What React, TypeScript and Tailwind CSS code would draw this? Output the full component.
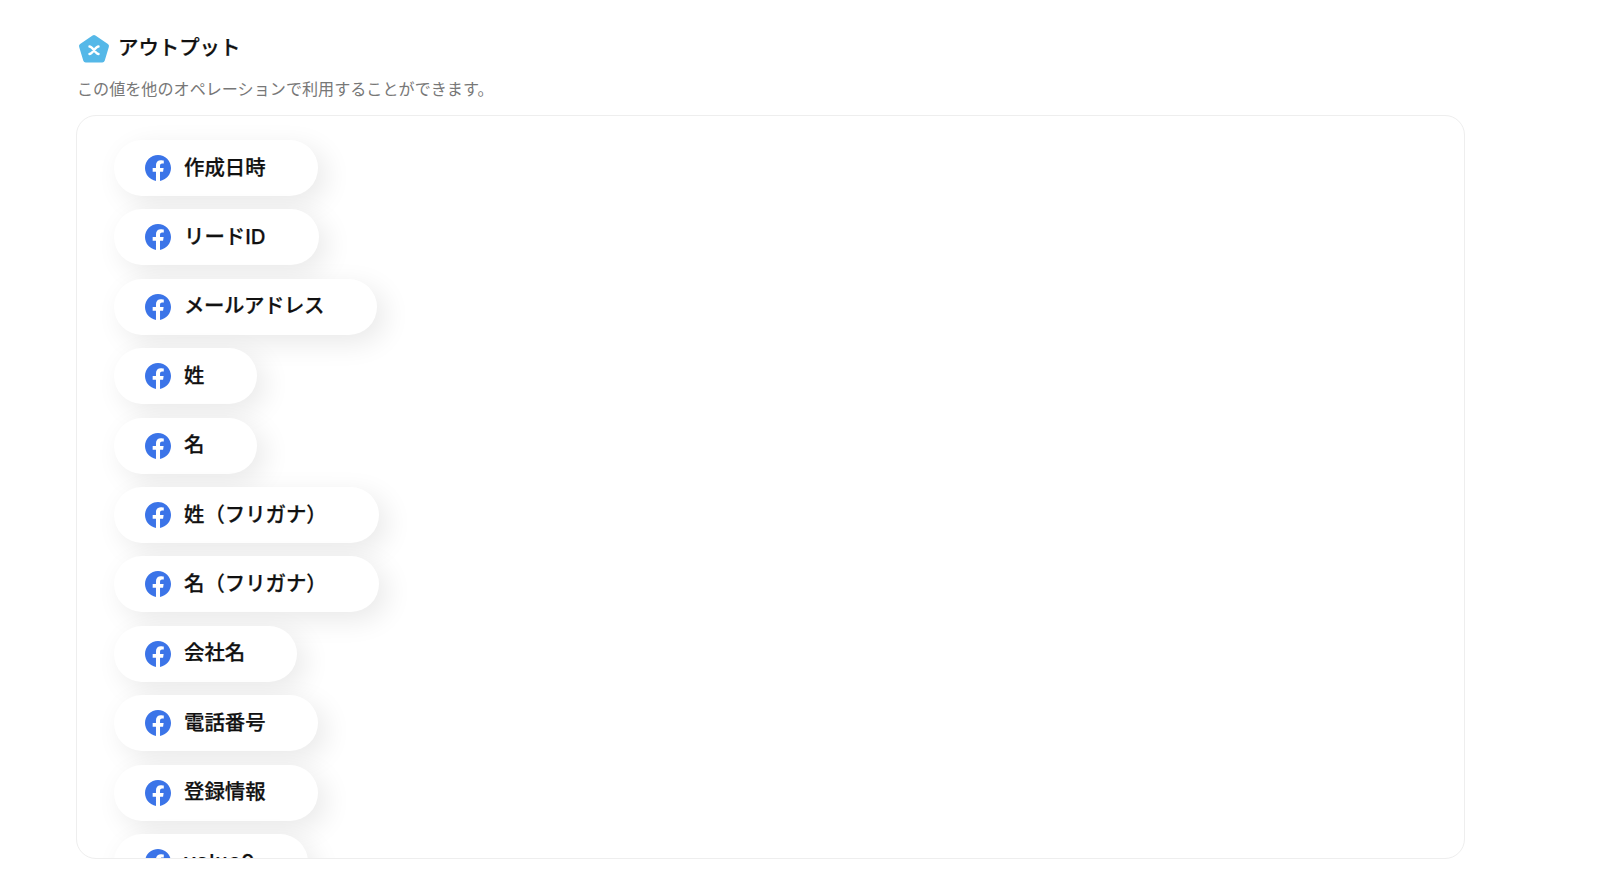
import React from 'react';

const outputs = [
  { label: '作成日時', width: 'w-[204px]', text: '' },
  { label: 'リードID', width: 'w-[205px]', text: '' },
  { label: 'メールアドレス', width: 'w-[263px]', text: 'tracking-[-0.4px]' },
  { label: '姓', width: 'w-[143px]', text: '' },
  { label: '名', width: 'w-[143px]', text: '' },
  { label: '姓（フリガナ）', width: 'w-[265px]', text: '' },
  { label: '名（フリガナ）', width: 'w-[265px]', text: '' },
  { label: '会社名', width: 'w-[183px]', text: '' },
  { label: '電話番号', width: 'w-[204px]', text: '' },
  { label: '登録情報', width: 'w-[204px]', text: '' },
  { label: 'value9', width: 'w-[194px]', text: 'tracking-[1px]' },
];

const FacebookIcon: React.FC = () => (
  <svg viewBox="0 0 24 24" className="h-[26px] w-[26px] shrink-0" fill="#3b74e8">
    <path d="M24 12.073c0-6.627-5.373-12-12-12s-12 5.373-12 12c0 5.99 4.388 10.954 10.125 11.854v-8.385H7.078v-3.47h3.047V9.43c0-3.007 1.792-4.669 4.533-4.669 1.312 0 2.686.235 2.686.235v2.953H15.83c-1.491 0-1.956.925-1.956 1.874v2.25h3.328l-.532 3.47h-2.796v8.385C19.612 23.027 24 18.062 24 12.073z" />
  </svg>
);

const OutputLogo: React.FC = () => (
  <svg viewBox="0 0 32 30" className="h-[30px] w-[32px] shrink-0">
    <path
      d="M16 3.5 L28.5 12 L24.3 26 L7.7 26 L3.5 12 Z"
      fill="#55b8e8"
      stroke="#55b8e8"
      strokeWidth="5"
      strokeLinejoin="round"
    />
    <path d="M11.5 12.5 C14.5 12.5 17.5 20 20.5 20 M20.5 12.5 C17.5 12.5 14.5 20 11.5 20" fill="none" stroke="#fff" strokeWidth="2.4" strokeLinecap="round" />
  </svg>
);

const App: React.FC = () => {
  return (
    <div className="h-[876px] overflow-hidden bg-white pl-[76px] pr-[135px] pt-[34px] font-['Inter','Noto_Sans_CJK_JP',sans-serif]">
      <div className="flex h-[30px] items-center gap-[8px] pl-[2px]">
        <OutputLogo />
        <h2 className="-mt-[3px] text-[20.4px] font-medium leading-[26px] text-[#111] [-webkit-text-stroke:0.25px_#111]">アウトプット</h2>
      </div>
      <p className="mt-[13px] pl-[1px] text-[16.1px] leading-[24px] text-[#777]">この値を他のオペレーションで利用することができます。</p>
      <div className="mt-[14px] flex h-[744px] flex-col items-start gap-[13.4px] overflow-hidden rounded-[20px] border border-[#eeeeee] bg-white pl-[37px] pt-[24px]">
        {outputs.map((item) => (
          <div
            key={item.label}
            className={`flex h-[56px] shrink-0 items-center gap-[13px] rounded-full bg-white pl-[31px] shadow-[8px_8px_28px_rgba(0,0,0,0.09)] ${item.width}`}
          >
            <FacebookIcon />
            <span className={`text-[20.4px] font-medium text-[#111] [-webkit-text-stroke:0.25px_#111] ${item.text}`}>{item.label}</span>
          </div>
        ))}
      </div>
    </div>
  );
};

export default App;
